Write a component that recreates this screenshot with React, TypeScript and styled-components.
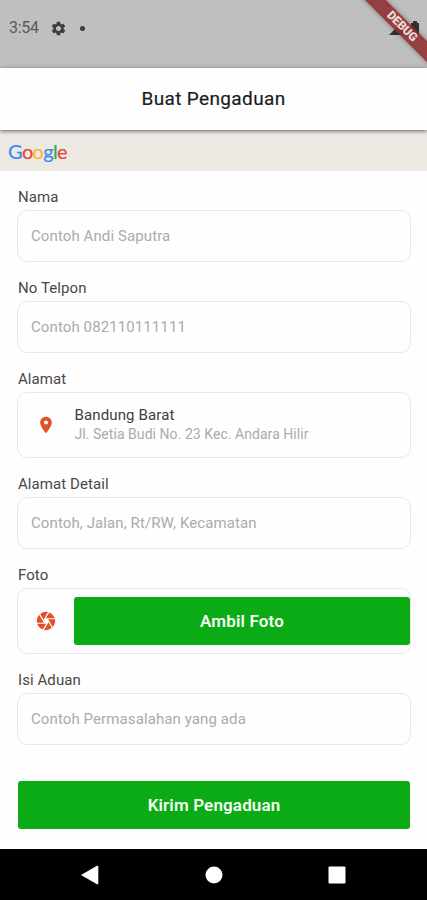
import React from "react";
import styled, { createGlobalStyle } from "styled-components";
import { MdCamera, MdLocationOn, MdSettings } from "react-icons/md";

const GlobalStyle = createGlobalStyle`
  * { box-sizing: border-box; }
  body { margin: 0; background: #fefefe; font-family: Roboto, sans-serif; }
`;

const Screen = styled.div`
  position: relative;
  width: 427px;
  height: 900px;
  overflow: hidden;
  display: flex;
  flex-direction: column;
  background: #fefefe;
`;

const StatusBar = styled.header`
  flex: 0 0 67.5px;
  display: flex;
  align-items: center;
  padding: 0 5px 11.5px 9px;
  background: #bfbfbf;
  color: #3d3d3d;
`;

const Clock = styled.span`
  width: 41px;
  font-size: 16px;
  line-height: 20px;
  letter-spacing: -0.3px;
  color: #5a5a5a;
`;

const NotificationDot = styled.span`
  width: 5px;
  height: 5px;
  margin-left: 13px;
  border-radius: 50%;
  background: #3d3d3d;
`;

const Indicators = styled.svg`
  display: block;
  margin-left: auto;
`;

const DebugRibbon = styled.div`
  position: absolute;
  top: 18px;
  right: -43px;
  width: 138px;
  height: 14.5px;
  transform: rotate(45deg);
  background: rgba(145, 46, 48, 0.88);
  box-shadow: 0 0 5px rgba(0, 0, 0, 0.35);
  color: #eadada;
  font-size: 12px;
  font-weight: 900;
  line-height: 15px;
  letter-spacing: -0.2px;
  text-align: center;
  text-indent: 3px;
`;

const AppBar = styled.div`
  position: relative;
  flex: 0 0 62px;
  display: flex;
  align-items: center;
  justify-content: center;
  background: #fefefe;
  box-shadow: 0 1px 4px rgba(0, 0, 0, 0.6);
`;

const Title = styled.h1`
  margin: 0;
  font-size: 19px;
  font-weight: 400;
  line-height: 24px;
  letter-spacing: 0.36px;
  color: #1c1c1c;
  -webkit-text-stroke: 0.2px #1c1c1c;
`;

const MapStrip = styled.div`
  flex: 0 0 41px;
  padding: 10px 8px 9px;
  background: #ebe9e1;
`;

const GoogleMark = styled.div`
  display: flex;
  font-family: "Lato", sans-serif;
  font-size: 20px;
  line-height: 22px;
  letter-spacing: -0.7px;
`;

const Letter = styled.span<{ $color: string }>`
  color: ${(p) => p.$color};
  -webkit-text-stroke: 0.2px ${(p) => p.$color};
`;

const Form = styled.main`
  flex: 1;
  display: flex;
  flex-direction: column;
  gap: 17px;
  padding: 17px 16px 0 17px;
`;

const Field = styled.section`
  display: flex;
  flex-direction: column;
  gap: 4px;
`;

const Label = styled.label`
  padding-left: 1px;
  font-size: 15px;
  line-height: 18px;
  letter-spacing: 0.08px;
  color: #484848;
`;

const InputBox = styled.input`
  width: 100%;
  height: 52.2px;
  padding: 0 13px;
  border: 1.5px solid #e8e8e8;
  border-radius: 10px;
  outline: none;
  background: #fefefe;
  font: 15px Roboto, sans-serif;
  letter-spacing: 0.1px;
  color: #333;
  &::placeholder { color: #ababab; opacity: 1; }
`;

const IconBox = styled.div`
  display: flex;
  align-items: center;
  height: 65.8px;
  border: 1.5px solid #e8e8e8;
  border-radius: 10px;
`;

const IconSlot = styled.span`
  flex: 0 0 56px;
  display: flex;
  justify-content: center;
  color: #e0522c;
`;

const Address = styled.div`
  display: flex;
  flex-direction: column;
  padding: 1px 0 0 0.5px;
`;

const Place = styled.span`
  font-size: 15px;
  line-height: 19px;
  letter-spacing: 0.13px;
  color: #3f3f3f;
`;

const Street = styled.span`
  font-size: 14px;
  line-height: 19px;
  letter-spacing: 0.05px;
  color: #ababab;
`;

const Button = styled.button`
  flex: 1;
  height: 48px;
  padding: 0;
  border: 0;
  border-radius: 3px;
  background: #0aab15;
  color: #f4fff4;
  font: 600 17px Roboto, sans-serif;
  letter-spacing: 0.14px;
`;

const SubmitRow = styled.div`
  display: flex;
  margin-top: 19.4px;
  padding: 0 1px;
`;

const NavBar = styled.nav`
  flex: 0 0 51px;
  display: flex;
  align-items: center;
  justify-content: space-between;
  padding: 0 81px;
  background: #000;
`;

const NavIcon = styled.svg`
  display: block;
  fill: #fff;
`;

const logo: [string, string][] = [
  ["G", "#4285f4"],
  ["o", "#e5453b"],
  ["o", "#f6b92b"],
  ["g", "#4285f4"],
  ["l", "#34a853"],
  ["e", "#e5453b"],
];

export default function App() {
  return (
    <Screen>
      <GlobalStyle />
      <StatusBar>
        <Clock>3:54</Clock>
        <MdSettings size={17} />
        <NotificationDot />
        <Indicators width="34" height="16" viewBox="0 0 34 16">
          <path d="M1 15 16 0v15Z" fill="#333" />
          <path d="M23 3h2V1h4v2h2v12h-8Z" fill="#333" />
        </Indicators>
      </StatusBar>
      <DebugRibbon>DEBUG</DebugRibbon>
      <AppBar>
        <Title>Buat Pengaduan</Title>
      </AppBar>
      <MapStrip>
        <GoogleMark>
          {logo.map(([char, color], i) => (
            <Letter key={i} $color={color}>{char}</Letter>
          ))}
        </GoogleMark>
      </MapStrip>
      <Form>
        <Field>
          <Label>Nama</Label>
          <InputBox placeholder="Contoh Andi Saputra" />
        </Field>
        <Field>
          <Label>No Telpon</Label>
          <InputBox placeholder="Contoh 082110111111" />
        </Field>
        <Field>
          <Label>Alamat</Label>
          <IconBox>
            <IconSlot><MdLocationOn size={20} /></IconSlot>
            <Address>
              <Place>Bandung Barat</Place>
              <Street>Jl. Setia Budi No. 23 Kec. Andara Hilir</Street>
            </Address>
          </IconBox>
        </Field>
        <Field>
          <Label>Alamat Detail</Label>
          <InputBox placeholder="Contoh, Jalan, Rt/RW, Kecamatan" />
        </Field>
        <Field>
          <Label>Foto</Label>
          <IconBox>
            <IconSlot><MdCamera size={22} /></IconSlot>
            <Button type="button">Ambil Foto</Button>
          </IconBox>
        </Field>
        <Field>
          <Label>Isi Aduan</Label>
          <InputBox placeholder="Contoh Permasalahan yang ada" />
        </Field>
        <SubmitRow>
          <Button type="submit">Kirim Pengaduan</Button>
        </SubmitRow>
      </Form>
      <NavBar>
        <NavIcon width="18" height="20" viewBox="0 0 18 20"><path d="M0 10 16 .8q1.3-.5 1.3.8v16.8q0 1.3-1.3.8Z" /></NavIcon>
        <NavIcon width="18" height="18" viewBox="0 0 18 18"><circle cx="9" cy="9" r="8.5" /></NavIcon>
        <NavIcon width="18" height="18" viewBox="0 0 18 18"><rect x=".5" y=".5" width="17" height="17" rx="1" /></NavIcon>
      </NavBar>
    </Screen>
  );
}
